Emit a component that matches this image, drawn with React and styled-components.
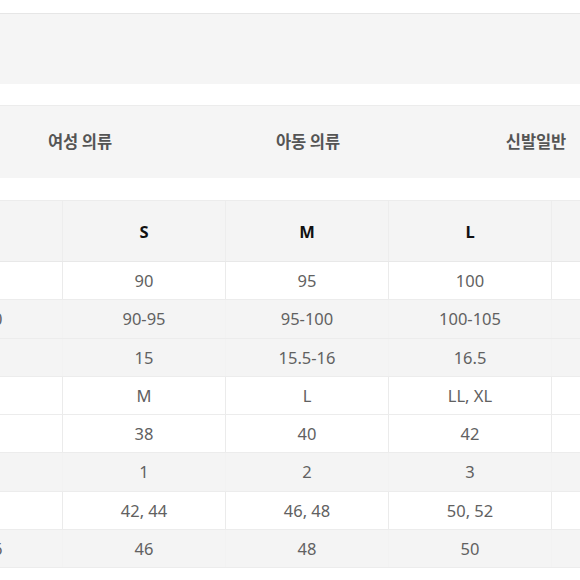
import React from 'react';
import styled, { createGlobalStyle } from 'styled-components';

const Global = createGlobalStyle`
    body {
        margin: 0;
        background: #fff;
        font-family: "Noto Sans", "Noto Sans CJK KR", sans-serif;
        overflow: hidden;
    }
`;

const Page = styled.div`
    width: 580px;
    height: 580px;
    overflow: hidden;
    padding-top: 13px;
    box-sizing: border-box;
`;

const Band = styled.div`
    height: 70px;
    background: #f5f5f5;
    border-top: 1px solid #e6e6e6;
`;

const TabBar = styled.div`
    display: flex;
    margin-top: 21px;
    margin-left: -34px;
    height: 72px;
    background: #f5f5f5;
    border-top: 1px solid #ececec;
`;

const Tab = styled.div`
    flex: 0 0 228px;
    display: flex;
    align-items: center;
    justify-content: center;
    padding-bottom: 2px;
    font-family: "Noto Sans CJK KR", sans-serif;
    font-size: 16.5px;
    font-weight: 700;
    color: #555;
    letter-spacing: -0.1px;
`;

const Table = styled.div`
    margin-top: 22px;
    margin-left: -100px;
    border-top: 1px solid #ececec;
`;

const Row = styled.div`
    display: grid;
    grid-template-columns: repeat(5, 163px);
    height: ${p => (p.$head ? '61px' : '38.25px')};
    box-sizing: border-box;
    background: ${p => (p.$gray ? '#f4f4f4' : '#fff')};
    border-bottom: 1px solid ${p => (p.$head ? '#e8e8e8' : '#ececec')};
`;

const Cell = styled.div`
    display: flex;
    align-items: center;
    justify-content: center;
    border-right: 1px solid ${p => (p.$head ? '#ededed' : p.$gray ? '#f2f2f2' : '#ebebeb')};
    font-size: ${p => (p.$head ? '16.5px' : '16.5px')};
    font-weight: ${p => (p.$head ? 700 : 400)};
    color: ${p => (p.$head ? '#111' : '#616161')};
    white-space: nowrap;
`;

const head = ['', 'S', 'M', 'L', ''];

const rows = [
    { gray: false, v: ['', '90', '95', '100', ''] },
    { gray: true, v: ['85-90', '90-95', '95-100', '100-105', ''] },
    { gray: true, v: ['', '15', '15.5-16', '16.5', ''] },
    { gray: false, v: ['', 'M', 'L', 'LL, XL', ''] },
    { gray: false, v: ['', '38', '40', '42', ''] },
    { gray: true, v: ['', '1', '2', '3', ''] },
    { gray: false, v: ['', '42, 44', '46, 48', '50, 52', ''] },
    { gray: true, v: ['44-46', '46', '48', '50', ''] },
];

export default function App() {
    return (
        <Page>
            <Global />
            <Band />
            <TabBar>
                <Tab>여성 의류</Tab>
                <Tab>아동 의류</Tab>
                <Tab>신발일반</Tab>
            </TabBar>
            <Table>
                <Row $head $gray>
                    {head.map((h, i) => (
                        <Cell key={i} $head $gray>{h}</Cell>
                    ))}
                </Row>
                {rows.map((r, i) => (
                    <Row key={i} $gray={r.gray}>
                        {r.v.map((t, j) => (
                            <Cell key={j} $gray={r.gray}>{t}</Cell>
                        ))}
                    </Row>
                ))}
            </Table>
        </Page>
    );
}
